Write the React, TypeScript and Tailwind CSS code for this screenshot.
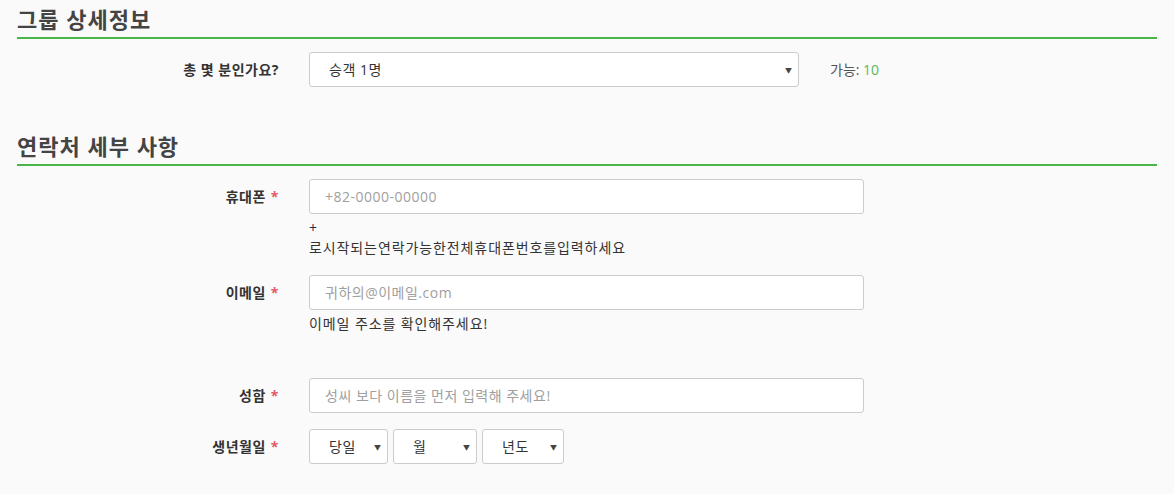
const font = "font-['Open_Sans','Noto_Sans_CJK_KR',sans-serif]";

function Arrow() {
  return (
    <span className="pointer-events-none absolute right-[7px] top-1/2 -translate-y-1/2 text-[7px] leading-none text-[#444]">
      ▼
    </span>
  );
}

function Select({ value, className }: { value: string; className: string }) {
  return (
    <div className={`relative h-[35px] ${className}`}>
      <select
        defaultValue={value}
        className={`h-full w-full appearance-none rounded-[3px] border border-[#ccc] bg-white pl-[19px] text-[14px] tracking-[0.5px] text-[#333] outline-none ${font}`}
      >
        <option>{value}</option>
      </select>
      <Arrow />
    </div>
  );
}

function Label({ text, required }: { text: string; required?: boolean }) {
  return (
    <div className="flex h-[35px] w-[262px] shrink-0 items-center justify-end text-[14px] font-bold tracking-[0.5px] text-[#333]">
      {text}
      {required && <span className="ml-[5px] text-[#e4576b]">*</span>}
    </div>
  );
}

function Input({ placeholder }: { placeholder: string }) {
  return (
    <input
      placeholder={placeholder}
      className={`h-[35px] w-[555px] rounded-[3px] border border-[#ccc] bg-white px-[15px] text-[14px] tracking-[0.5px] text-[#333] outline-none placeholder:text-[#a0a0a0] ${font}`}
    />
  );
}

function Heading({ children }: { children: string }) {
  return (
    <h2 className="border-b-2 border-[#4cb548] pb-[3px] text-[22px] font-bold leading-[30px] tracking-[1px] text-[#444]">
      {children}
    </h2>
  );
}

export default function App() {
  return (
    <div className={`min-h-[494px] bg-[#fafafa] pl-[17px] pr-[17px] pt-[4px] ${font}`}>
      <Heading>그룹 상세정보</Heading>

      <div className="mt-[13px] flex items-center">
        <Label text="총 몇 분인가요?" />
        <Select value="승객 1명" className="ml-[30px] w-[490px]" />
        <div className="ml-[31px] text-[14px] text-[#555]">
          가능: <span className="text-[#5cb85c]">10</span>
        </div>
      </div>

      <div className="mt-[44px]">
        <Heading>연락처 세부 사항</Heading>
      </div>

      <div className="mt-[13px] flex">
        <Label text="휴대폰" required />
        <div className="ml-[30px]">
          <Input placeholder="+82-0000-00000" />
          <div className="mt-[4px] text-[14px] leading-[20px] tracking-[0.9px] text-[#333]">
            <div className="text-[#1c2b4a]">+</div>
            <div>로시작되는연락가능한전체휴대폰번호를입력하세요</div>
          </div>
        </div>
      </div>

      <div className="mt-[17px] flex">
        <Label text="이메일" required />
        <div className="ml-[30px]">
          <Input placeholder="귀하의@이메일.com" />
          <div className="mt-[4px] text-[14px] leading-[20px] tracking-[0.9px] text-[#333]">
            이메일 주소를 확인해주세요!
          </div>
        </div>
      </div>

      <div className="mt-[44px] flex">
        <Label text="성함" required />
        <div className="ml-[30px]">
          <Input placeholder="성씨 보다 이름을 먼저 입력해 주세요!" />
        </div>
      </div>

      <div className="mt-[16px] flex">
        <Label text="생년월일" required />
        <div className="ml-[30px] flex gap-[5px]">
          <Select value="당일" className="w-[79px]" />
          <Select value="월" className="w-[84px]" />
          <Select value="년도" className="w-[82px]" />
        </div>
      </div>
    </div>
  );
}
